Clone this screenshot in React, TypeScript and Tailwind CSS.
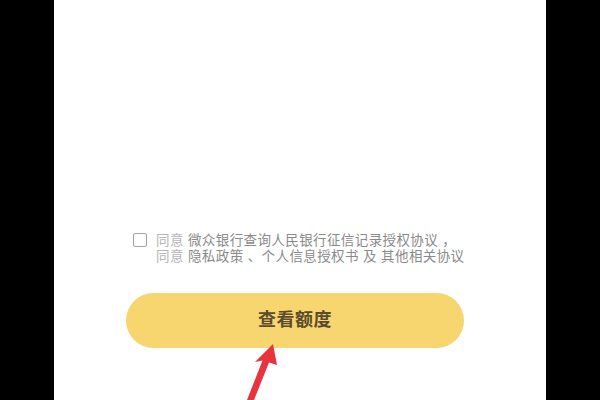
import React from "react";

const cjk = { fontFamily: '"Liberation Sans", "Noto Sans CJK SC", sans-serif' };

const RedArrow = () => (
  <svg
    className="absolute left-[240px] top-[340px]"
    width="50"
    height="60"
    viewBox="0 0 50 60"
  >
    <polygon
      points="33,4 37,25 29,22.5 14,60 7,60 22.5,20.5 15,22"
      fill="#e8343c"
    />
  </svg>
);

export default function App() {
  return (
    <div className="relative flex h-[400px] w-[600px] justify-center bg-black" style={cjk}>
      <div className="flex w-[492px] flex-col bg-white">
        <div className="ml-[79px] mt-[233px] flex items-start gap-[9px]">
          <span className="block h-[14px] w-[14px] shrink-0 rounded-[2px] border-[1.5px] border-[#a5a5a5]" />
          <div className="flex flex-col text-[13.5px] leading-[16px] tracking-[0.4px] text-[#8a8a8a]">
            <p>
              <span className="text-[#b5b5b5]">同意</span> 微众银行查询人民银行征信记录授权协议 ，
            </p>
            <p>
              <span className="text-[#b5b5b5]">同意</span> 隐私政策 、个人信息授权书 及 其他相关协议
            </p>
          </div>
        </div>
        <button className="ml-[72px] mt-[28px] flex h-[55px] w-[338px] items-center justify-center rounded-full bg-[#f7d56f] text-[18px] font-bold tracking-[0.5px] text-[#5a4b2c]">
          查看额度
        </button>
      </div>
      <RedArrow />
    </div>
  );
}
